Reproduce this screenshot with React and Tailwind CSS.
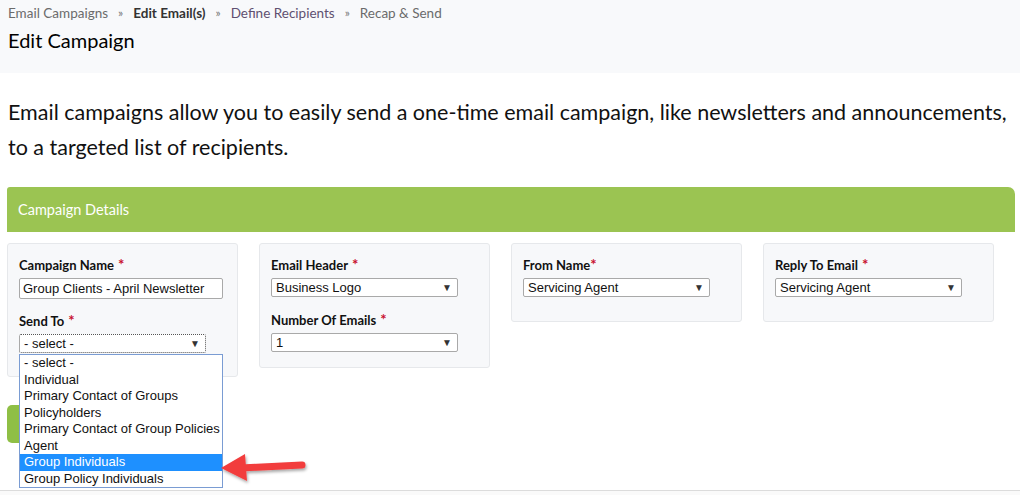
import { Fragment } from 'react';

const sans = { fontFamily: 'Lato, "Open Sans", sans-serif' };
const arial = { fontFamily: '"Liberation Sans", Arial, sans-serif' };

function Label({ children, tight }) {
  return (
    <div className="text-[13px] font-bold text-[#111] leading-none h-[16px] flex items-end" style={sans}>
      {children}
      <span className={`text-[#c8102e] text-[15px] ${tight ? 'ml-0' : 'ml-[4px]'}`}>*</span>
    </div>
  );
}

function FakeSelect({ value, focus }) {
  return (
    <div
      className={`mt-[6px] w-[187px] h-[19px] bg-white rounded-[2px] flex items-center justify-between pl-[4px] pr-[5px] text-[13px] text-[#111] ${focus ? 'border border-dotted border-[#555]' : 'border border-[#a9a9a9]'}`}
      style={arial}
    >
      <span>{value}</span>
      <span className="text-[10px] text-[#333] leading-none">▼</span>
    </div>
  );
}

const options = [
  '- select -',
  'Individual',
  'Primary Contact of Groups',
  'Policyholders',
  'Primary Contact of Group Policies',
  'Agent',
  'Group Individuals',
  'Group Policy Individuals',
];

export default function App() {
  return (
    <div className="w-[1020px] h-[495px] bg-white overflow-hidden relative" style={sans}>
      {/* page header */}
      <div className="bg-[#f8f9fb] h-[73px] px-[8px] pt-[4px]">
        <div className="text-[13.5px] flex items-center gap-[10px] h-[18px]">
          <span className="text-[#6b6b6b]">Email Campaigns</span>
          <span className="text-[#777] text-[12px]">»</span>
          <span className="font-bold text-[#333]">Edit Email(s)</span>
          <span className="text-[#777] text-[12px]">»</span>
          <span className="text-[#5f5070]">Define Recipients</span>
          <span className="text-[#777] text-[12px]">»</span>
          <span className="text-[#6b6b6b]">Recap &amp; Send</span>
        </div>
        <div className="text-[20px] text-black mt-[8px] leading-none">Edit Campaign</div>
      </div>

      <p className="px-[8px] mt-[22px] text-[21.5px] leading-[35px] text-[#111]">
        Email campaigns allow you to easily send a one-time email campaign, like newsletters and announcements, to a targeted list of recipients.
      </p>

      <div className="pl-[7px] pr-[5px] mt-[22px]">
        <div className="h-[45px] bg-[#9bc452] rounded-tl-[3px] rounded-tr-[7px] flex items-center pl-[11px] text-white text-[14.5px]">
          Campaign Details
        </div>

        <div className="flex items-start gap-[21px] mt-[11px]">
          {/* card 1 */}
          <div className="relative w-[231px] h-[134px] bg-[#f7f8fa] border border-[#e6e8eb] rounded-[3px] pl-[11px] pt-[12px]">
            <Label>Campaign Name</Label>
            <div className="mt-[6px] w-[204px] h-[21px] bg-white border border-[#a9a9a9] rounded-[2px] flex items-center pl-[3px] text-[13px] text-[#111]" style={arial}>
              Group Clients - April Newsletter
            </div>
            <div className="mt-[13px]">
              <Label>Send To</Label>
            </div>
            <FakeSelect value="- select -" focus />
            <div className="absolute left-[11px] top-[110px] w-[204px] bg-white border border-[#7a9cd3] z-10 text-[13px] text-[#111]" style={arial}>
              {options.map((o) => (
                <div
                  key={o}
                  className={`h-[16.5px] leading-[16px] pl-[4px] ${o === 'Group Individuals' ? 'bg-[#1e90ff] text-white' : ''}`}
                >
                  {o}
                </div>
              ))}
            </div>
          </div>

          {/* card 2 */}
          <div className="w-[231px] h-[125px] bg-[#f7f8fa] border border-[#e6e8eb] rounded-[3px] pl-[11px] pt-[12px]">
            <Label>Email Header</Label>
            <FakeSelect value="Business Logo" />
            <div className="mt-[14px]">
              <Label>Number Of Emails</Label>
            </div>
            <FakeSelect value="1" />
          </div>

          {/* card 3 */}
          <div className="w-[231px] h-[79px] bg-[#f7f8fa] border border-[#e6e8eb] rounded-[3px] pl-[11px] pt-[12px]">
            <Label tight>From Name</Label>
            <FakeSelect value="Servicing Agent" />
          </div>

          {/* card 4 */}
          <div className="w-[231px] h-[79px] bg-[#f7f8fa] border border-[#e6e8eb] rounded-[3px] pl-[11px] pt-[12px]">
            <Label>Reply To Email</Label>
            <FakeSelect value="Servicing Agent" />
          </div>
        </div>

        {/* button hidden behind the open dropdown */}
        <div className="mt-[28px] h-[38px] w-[90px] bg-[#8fbf45] rounded-[5px]" />
      </div>

      <div className="absolute left-0 right-0 top-[490px] h-[5px] border-t border-[#dcdcdc] bg-[#fafafa]" />

      {/* annotation arrow */}
      <svg className="absolute left-[218px] top-[450px] z-20" width="96" height="40" viewBox="0 0 96 40">
        <defs>
          <filter id="sh" x="-20%" y="-40%" width="150%" height="200%">
            <feDropShadow dx="1" dy="2" stdDeviation="1.5" floodColor="#000" floodOpacity="0.35" />
          </filter>
        </defs>
        <g filter="url(#sh)">
          <line x1="22" y1="18" x2="84" y2="15" stroke="#f23d3d" strokeWidth="7" strokeLinecap="round" />
          <polygon points="3,18 27,4 29,31" fill="#f23d3d" />
        </g>
      </svg>
    </div>
  );
}
